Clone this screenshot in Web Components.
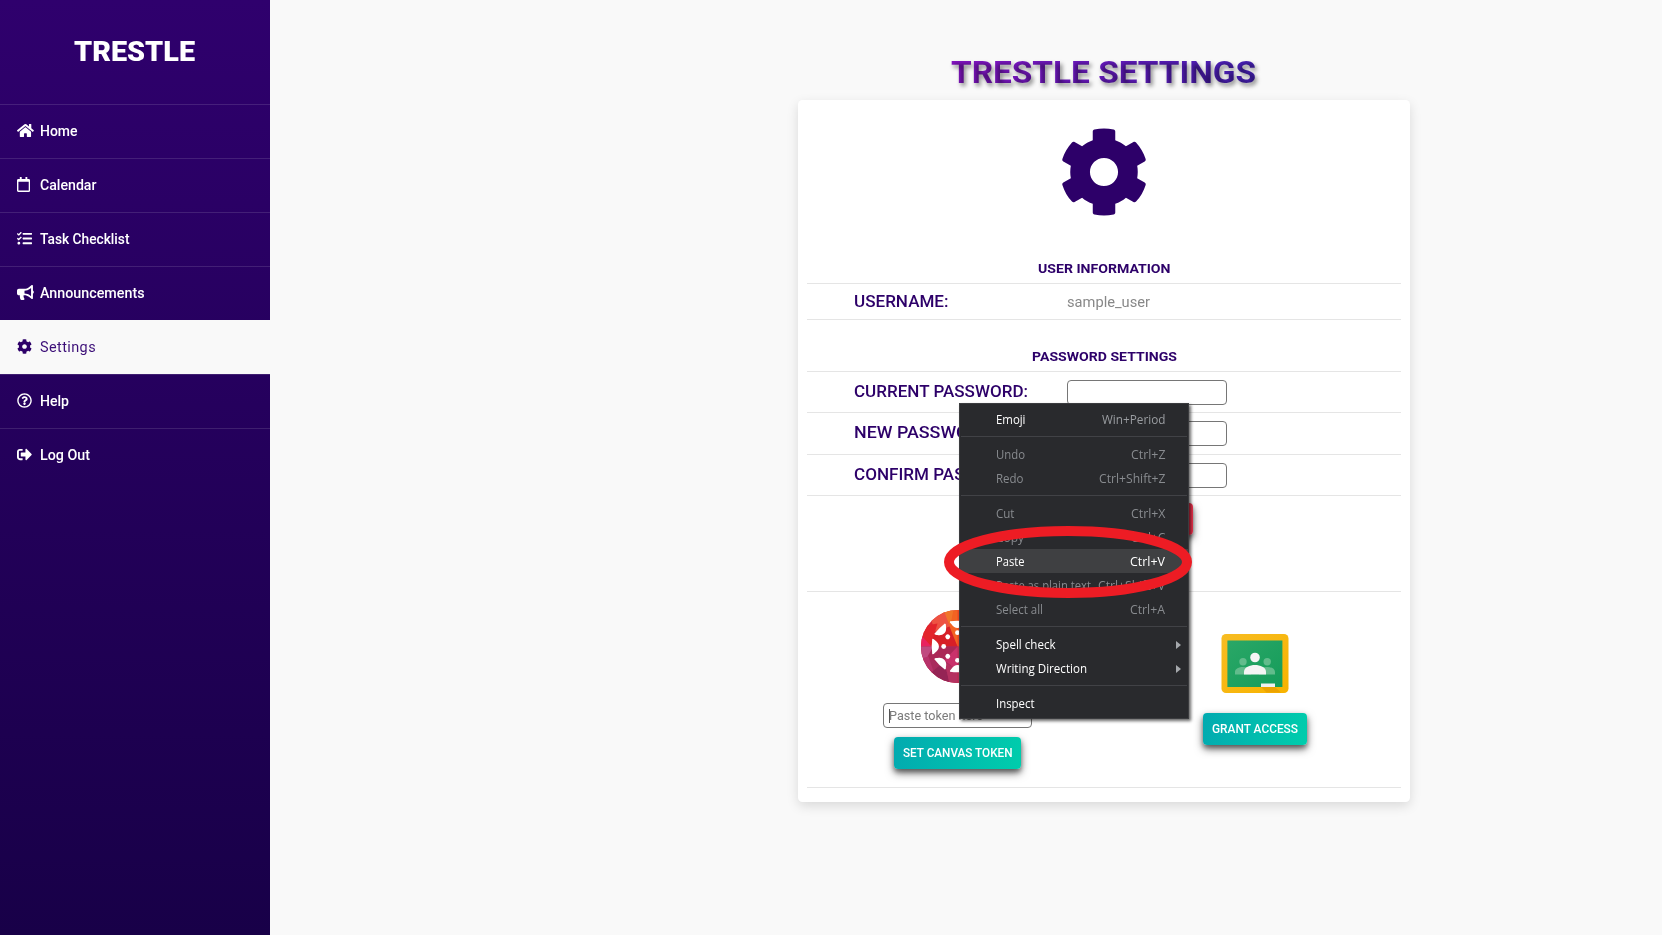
<!DOCTYPE html>
<html lang="en">
<head>
<meta charset="utf-8">
<title>Trestle Settings</title>
<style>
html,body{margin:0;height:100%;overflow:hidden}
body{font-family:Roboto,"Open Sans",sans-serif;background:#f9f9f9;color:#2d0069}
</style>
</head>
<body>
<trestle-app></trestle-app>
<script>
const ICONS = {
home:[576,"M280.37 148.26L96 300.11V464a16 16 0 0 0 16 16l112.06-.29a16 16 0 0 0 15.92-16V368a16 16 0 0 1 16-16h64a16 16 0 0 1 16 16v95.64a16 16 0 0 0 16 16.05L464 480a16 16 0 0 0 16-16V300L295.67 148.26a12.19 12.19 0 0 0-15.3 0zM571.6 251.47L488 182.56V44.05a12 12 0 0 0-12-12h-56a12 12 0 0 0-12 12v72.61L318.47 43a48 48 0 0 0-61 0L4.34 251.47a12 12 0 0 0-1.6 16.9l25.5 31A12 12 0 0 0 45.15 301l235.22-193.74a12.19 12.19 0 0 1 15.3 0L530.9 301a12 12 0 0 0 16.9-1.6l25.5-31a12 12 0 0 0-1.7-16.93z"],
calendar:[448,"M400 64h-48V12c0-6.6-5.4-12-12-12h-40c-6.6 0-12 5.4-12 12v52H160V12c0-6.6-5.4-12-12-12h-40c-6.6 0-12 5.4-12 12v52H48C21.5 64 0 85.5 0 112v352c0 26.5 21.5 48 48 48h352c26.5 0 48-21.5 48-48V112c0-26.5-21.5-48-48-48zm-6 400H54c-3.3 0-6-2.7-6-6V160h352v298c0 3.3-2.7 6-6 6z"],
tasks:[512,"M139.61 35.5a12 12 0 0 0-17 0L58.93 98.81l-22.7-22.12a12 12 0 0 0-17 0L3.53 92.41a12 12 0 0 0 0 17l47.59 47.4a12.78 12.78 0 0 0 17.61 0l15.59-15.62L156.52 69a12.09 12.09 0 0 0 .09-17zm0 159.19a12 12 0 0 0-17 0l-63.68 63.72-22.7-22.1a12 12 0 0 0-17 0L3.53 252a12 12 0 0 0 0 17L51 316.5a12.77 12.77 0 0 0 17.6 0l15.7-15.69 72.2-72.22a12 12 0 0 0 .09-16.9zM64 368c-26.49 0-48.59 21.5-48.59 48S37.53 464 64 464a48 48 0 0 0 0-96zm432 16H208a16 16 0 0 0-16 16v32a16 16 0 0 0 16 16h288a16 16 0 0 0 16-16v-32a16 16 0 0 0-16-16zm0-320H208a16 16 0 0 0-16 16v32a16 16 0 0 0 16 16h288a16 16 0 0 0 16-16V80a16 16 0 0 0-16-16zm0 160H208a16 16 0 0 0-16 16v32a16 16 0 0 0 16 16h288a16 16 0 0 0 16-16v-32a16 16 0 0 0-16-16z"],
bullhorn:[576,"M576 240c0-23.63-12.95-44.04-32-55.12V32.01C544 23.26 537.02 0 512 0c-7.12 0-14.19 2.38-19.98 7.02l-85.03 68.03C364.28 109.19 310.66 128 256 128H64c-35.35 0-64 28.65-64 64v96c0 35.35 28.65 64 64 64h33.7c-1.39 10.48-2.18 21.14-2.18 32 0 39.77 9.26 77.35 25.56 110.94 5.19 10.69 16.52 17.06 28.4 17.06h74.28c26.05 0 41.69-29.84 25.9-50.56-16.4-21.52-26.15-48.36-26.15-77.44 0-11.11 1.62-21.79 4.41-32H256c54.66 0 108.28 18.81 150.98 52.95l85.03 68.03a32.023 32.023 0 0 0 19.98 7.02c24.92 0 32-22.78 32-32V295.13C563.05 284.04 576 263.63 576 240zm-96 141.42l-33.05-26.44C392.95 311.78 325.12 288 256 288v-96c69.12 0 136.95-23.78 190.95-66.98L480 98.58v282.84z"],
cog:[512,"M487.4 315.7l-42.6-24.6c4.3-23.2 4.3-47 0-70.2l42.6-24.6c4.9-2.8 7.1-8.6 5.5-14-11.1-35.6-30-67.8-54.7-94.6-3.8-4.1-10-5.1-14.8-2.3L380.8 110c-17.9-15.4-38.5-27.3-60.8-35.1V25.8c0-5.6-3.9-10.5-9.4-11.7-36.7-8.2-74.3-7.8-109.2 0-5.5 1.2-9.4 6.1-9.4 11.7V75c-22.2 7.9-42.8 19.8-60.8 35.1L88.7 85.5c-4.9-2.8-11-1.9-14.8 2.3-24.7 26.7-43.6 58.9-54.7 94.6-1.7 5.4.6 11.2 5.5 14L67.3 221c-4.3 23.2-4.3 47 0 70.2l-42.6 24.6c-4.9 2.8-7.1 8.6-5.5 14 11.1 35.6 30 67.8 54.7 94.6 3.8 4.1 10 5.1 14.8 2.3l42.6-24.6c17.9 15.4 38.5 27.3 60.8 35.1v49.2c0 5.6 3.9 10.5 9.4 11.7 36.7 8.2 74.3 7.8 109.2 0 5.5-1.2 9.4-6.1 9.4-11.7v-49.2c22.2-7.9 42.8-19.8 60.8-35.1l42.6 24.6c4.9 2.8 11 1.9 14.8-2.3 24.7-26.7 43.6-58.9 54.7-94.6 1.5-5.5-.7-11.3-5.6-14.1zM256 336c-44.1 0-80-35.9-80-80s35.9-80 80-80 80 35.9 80 80-35.9 80-80 80z"],
help:[512,"M256 8C119.043 8 8 119.083 8 256c0 136.997 111.043 248 248 248s248-111.003 248-248C504 119.083 392.957 8 256 8zm0 448c-110.532 0-200-89.431-200-200 0-110.495 89.472-200 200-200 110.491 0 200 89.471 200 200 0 110.53-89.431 200-200 200zm107.244-255.2c0 67.052-72.421 68.084-72.421 92.863V300c0 6.627-5.373 12-12 12h-45.647c-6.627 0-12-5.373-12-12v-8.659c0-35.745 27.1-50.034 47.579-61.516 17.561-9.845 28.324-16.541 28.324-29.579 0-17.246-21.999-28.693-39.784-28.693-23.189 0-33.894 10.977-48.942 29.969-4.057 5.12-11.46 6.071-16.666 2.124l-27.824-21.098c-5.107-3.872-6.251-11.066-2.644-16.363C184.846 131.491 214.94 112 261.794 112c49.071 0 101.45 38.304 101.45 88.8zM298 368c0 23.159-18.841 42-42 42s-42-18.841-42-42 18.841-42 42-42 42 18.841 42 42z"],
logout:[512,"M497 273L329 441c-15 15-41 4.5-41-17v-96H152c-13.3 0-24-10.7-24-24v-96c0-13.3 10.7-24 24-24h136V88c0-21.4 25.9-32 41-17l168 168c9.3 9.4 9.3 24.6 0 34zM192 436v-40c0-6.6-5.4-12-12-12H96c-17.7 0-32-14.3-32-32V160c0-17.7 14.3-32 32-32h84c6.6 0 12-5.4 12-12V76c0-6.6-5.4-12-12-12H96c-53 0-96 43-96 96v192c0 53 43 96 96 96h84c6.6 0 12-5.4 12-12z"]
};

function define(name, html, setup) {
  const tpl = document.createElement('template');
  tpl.innerHTML = html;
  customElements.define(name, class extends HTMLElement {
    connectedCallback() {
      if (this.shadowRoot) return;
      this.attachShadow({mode:'open'}).appendChild(tpl.content.cloneNode(true));
      if (setup) setup(this, this.shadowRoot);
    }
  });
}

// A single-line label stretched horizontally to a set width.
define('fit-text', `<style>
:host{display:inline-block;white-space:nowrap;flex:none}
span{display:inline-block;transform-origin:0 50%;background:var(--ink,none);-webkit-background-clip:text;background-clip:text}
</style><span><slot></slot></span>`, (el, root) => {
  const w = parseFloat(el.getAttribute('w'));
  const s = root.querySelector('span');
  const natural = s.getBoundingClientRect().width;
  el.style.width = w + 'px';
  if (natural) s.style.transform = `scaleX(${w / natural})`;
});

define('fa-icon', `<style>:host{display:inline-block;height:1em;line-height:0}svg{height:1em;fill:currentColor}</style><svg><path/></svg>`,
(el, root) => {
  const [w, d] = ICONS[el.getAttribute('name')];
  const svg = root.querySelector('svg');
  svg.setAttribute('viewBox', `0 0 ${w} 512`);
  svg.style.width = w / 512 + 'em';
  root.querySelector('path').setAttribute('d', d);
});

define('nav-item', `<style>
:host{display:flex;align-items:center;height:53px;border-top:1px solid rgba(255,255,255,.12);padding-left:17.3px;color:#fff;font-size:14px;font-weight:500;line-height:20px}
:host([active]){background:#f9f9f9;color:#3c0f78;font-weight:400;border-top-color:#f9f9f9;letter-spacing:.4px}
:host([active]) .i{color:#2d0069}
.i{width:23px;font-size:15px;display:flex;align-items:center;margin-top:-2px}
.t{margin-top:-1px}
</style><span class="i"></span><span class="t"><slot></slot></span>`, (el, root) => {
  const icon = document.createElement('fa-icon');
  icon.setAttribute('name', el.getAttribute('icon'));
  root.querySelector('.i').append(icon);
});

define('side-bar', `<style>
:host{display:flex;flex-direction:column;width:270px;flex:none;background:linear-gradient(#2f006d,#180048)}
.brand{height:104px;display:flex;align-items:center;justify-content:center;box-sizing:border-box;padding-right:1px;color:#fff;font-size:27px;font-weight:900;line-height:32px}
</style>
<div class="brand"><fit-text w="121">TRESTLE</fit-text></div>
<nav>
<nav-item icon="home"><fit-text w="37.5">Home</fit-text></nav-item>
<nav-item icon="calendar"><fit-text w="56.5">Calendar</fit-text></nav-item>
<nav-item icon="tasks"><fit-text w="89.5">Task Checklist</fit-text></nav-item>
<nav-item icon="bullhorn"><fit-text w="104.5">Announcements</fit-text></nav-item>
<nav-item icon="cog" active><fit-text w="56">Settings</fit-text></nav-item>
<nav-item icon="help"><fit-text w="29">Help</fit-text></nav-item>
<nav-item icon="logout"><fit-text w="50">Log Out</fit-text></nav-item>
</nav>`);

define('section-title', `<style>
:host{display:flex;align-items:flex-end;justify-content:center;box-sizing:border-box;font-size:13.6px;font-weight:700;line-height:20px;padding-bottom:5px}
</style><slot></slot>`);

define('form-row', `<style>
:host{display:flex;align-items:center;box-sizing:border-box;border-top:1px solid #e5e5e5;padding-left:47.4px}
.label{width:212.6px;font-size:16.4px;font-weight:500;line-height:20px;padding-bottom:1px}
</style><div class="label"><slot name="label"></slot></div><slot></slot>`);

define('text-box', `<style>
:host{display:flex;align-items:center;box-sizing:border-box;width:160px;height:25px;border:1px solid #767676;border-radius:4px;background:#fff;color:#7b7b7b;font-size:13.3px;line-height:16px;padding-left:5px}
:host([focused])::before{content:"";width:1px;height:14px;background:#555;margin-right:-1px}
</style><slot></slot>`);

define('action-button', `<style>
:host{display:flex;align-items:center;justify-content:center;height:32px;border-radius:4px;background:linear-gradient(100deg,#02aab0,#00cdac);color:#fff;font-size:12.3px;font-weight:500;line-height:16px;box-shadow:0 4px 8px rgba(0,0,0,.55),0 3px 4px rgba(0,0,0,.3)}
:host([danger]){background:linear-gradient(100deg,#ff5060,#e8304a)}
</style><slot></slot>`);

define('canvas-logo', `<style>:host{display:block;line-height:0}</style>
<svg width="73" height="73" viewBox="-36.5 -36.5 73 73">
<clipPath id="c"><circle r="36.5"/></clipPath>
<g clip-path="url(#c)">
<rect x="-37" y="-37" width="74" height="74" fill="#d92b3a"/>
<path d="M0 0L-18-37H20z" fill="#f26322"/><path d="M0 0L0-37 37-37 37 0z" fill="#ed4b24"/>
<path d="M-7-22L-18-37H-4z" fill="#f0762a"/><path d="M-22-14L-30-37H-14L-7-18z" fill="#ee5242"/>
<path d="M0 0L-8-20-30-12-25 0z" fill="#d71f27"/><path d="M-37-20L-20-23-27 0H-37z" fill="#e3242b"/>
<path d="M-37-12L-26 0H-37z" fill="#e8235f"/>
<path d="M-37 0H0V37H-37z" fill="#a92a5d"/><path d="M-37 0H-24L-30 12-37 14z" fill="#c04a80"/>
<path d="M-30 10L-24 0 0 0-18 18z" fill="#ab2757"/><path d="M-37 12L-29 10-24 25-37 25z" fill="#b8326a"/>
<path d="M-25 25L-13 15-8 37H-25z" fill="#952455"/><path d="M-13 15L0 24V37H-8z" fill="#b43160"/>
<path d="M0 0L-13 14 0 24 13 14z" fill="#c9316b"/><path d="M0 0H37V37H0z" fill="#b93058"/>
</g>
<g fill="#fff"></g></svg>`, (el, root) => {
  let s = '';
  for (let a = 0; a < 360; a += 45)
    s += `<g transform="rotate(${a})"><path d="M-25.3-7.4Q-24.4-8.4-22.5-6.2Q-18.6-3.5-18.6 0T-22.5 6.2Q-24.4 8.4-25.3 7.4Q-26.3 0-25.3-7.4Z"/><circle cx="-13.8" r="2.4"/></g>`;
  root.querySelector('svg>g:last-of-type').innerHTML = s;
});

define('classroom-logo', `<style>:host{display:block;line-height:0}</style>
<svg width="68" height="59" viewBox="0 0 68 59">
<defs><linearGradient id="y" x2="1" y2="1"><stop stop-color="#f7bc22"/><stop offset="1" stop-color="#f8b300"/></linearGradient>
<linearGradient id="g" x2="1" y2="1"><stop stop-color="#2aa767"/><stop offset="1" stop-color="#159c5a"/></linearGradient></defs>
<rect x=".5" width="67" height="59" rx="4.5" fill="url(#y)"/><rect x="6.4" y="6.5" width="55" height="46.5" fill="url(#g)"/>
<g fill="#62bc8c"><circle cx="22" cy="27.8" r="3.7"/><circle cx="46.2" cy="27.8" r="3.7"/>
<path d="M14 40.5V38c0-3.500 4-5 8-5s6 1 8 3v4.500zM38 40.500V36c2-2 4-3 8-3s8 1.500 8 5v2.500z"/></g>
<g fill="#f4f5f4"><circle cx="34" cy="23.5" r="4.8"/><path d="M23 40.500V38c0-5 6-7 11-7s11 2 11 7v2.500z"/></g>
<path d="M40 53h14l6 5.500H45.500z" fill="#eda300"/><rect x="40" y="49.500" width="14" height="3.500" fill="#f0f0f0"/></svg>`);

define('settings-card', `<style>
:host{display:block;box-sizing:border-box;width:612px;height:702px;background:#fff;border-radius:4.5px;padding:27px 9px 0;box-shadow:0 4px 12px rgba(0,0,0,.13)}
.gear{display:block;height:90px;font-size:90px;text-align:center}
.user{color:#888;font-size:14px;line-height:18px;padding-top:1px}
.submit{height:96px;box-sizing:border-box;border-top:1px solid #e5e5e5;display:flex;justify-content:center;padding-top:7px}
.links{height:197px;box-sizing:border-box;border:solid #e5e5e5;border-width:1px 0;display:grid;grid-template-columns:301px 1fr}
.col{display:flex;flex-direction:column;align-items:center}
.a{padding-top:18px}
.b{padding-top:42px;margin-left:1px}
</style>
<fa-icon class="gear" name="cog"></fa-icon>
<section-title style="height:66px"><fit-text w="132.500">USER INFORMATION</fit-text></section-title>
<form-row style="height:36px"><fit-text slot="label" w="94.500" style="padding-top:2px">USERNAME:</fit-text><fit-text class="user" w="83">sample_user</fit-text></form-row>
<section-title style="height:52px;border-top:1px solid #e5e5e5"><fit-text w="145">PASSWORD SETTINGS</fit-text></section-title>
<form-row style="height:41px"><fit-text slot="label" w="174">CURRENT PASSWORD:</fit-text><text-box></text-box></form-row>
<form-row style="height:42px"><fit-text slot="label" w="142">NEW PASSWORD:</fit-text><text-box></text-box></form-row>
<form-row style="height:41px"><fit-text slot="label" w="174">CONFIRM PASSWORD:</fit-text><text-box></text-box></form-row>
<div class="submit"><action-button danger style="width:178px"></action-button></div>
<div class="links">
<div class="col a"><canvas-logo></canvas-logo>
<text-box focused style="width:149px;margin-top:20px"><fit-text w="94">Paste token here</fit-text></text-box>
<action-button style="width:127px;margin-top:9px"><fit-text w="109.500">SET CANVAS TOKEN</fit-text></action-button></div>
<div class="col b"><classroom-logo></classroom-logo>
<action-button style="width:104px;margin-top:20px"><fit-text w="86">GRANT ACCESS</fit-text></action-button></div>
</div>`);

define('menu-item', `<style>
:host{display:flex;align-items:center;justify-content:space-between;height:24px;box-sizing:border-box;padding:1px 23px 0 36px;color:#888b8f}
:host([on]){color:#fff}
:host([hot]){background:#3f4042;--k:#fff}
.k{color:var(--k,#888b8f)}
:host([first]) .k{color:#9a9da1}
:host([sub])::after{content:"";border:4px solid transparent;border-left:5px solid #a5a8ac;border-right:0;margin-right:-16px}
:host([sub]) .k{display:none}
</style><slot></slot><span class="k"><slot name="key"></slot></span>`);

define('context-menu', `<style>
:host{display:block;box-sizing:border-box;width:230px;height:316px;background:#292a2d;border:1px solid #3b3c3f;padding:3px 0;font:12px/16px "Open Sans","Noto Sans",sans-serif;box-shadow:2px 2px 3px rgba(0,0,0,.6)}
hr{height:1px;border:0;margin:5px 1px;background:#414246}
</style>
<menu-item on first><fit-text w="29.500">Emoji</fit-text><fit-text slot="key" w="63.500">Win+Period</fit-text></menu-item><hr>
<menu-item><fit-text w="29">Undo</fit-text><fit-text slot="key" w="34.500">Ctrl+Z</fit-text></menu-item>
<menu-item><fit-text w="27.500">Redo</fit-text><fit-text slot="key" w="66.500">Ctrl+Shift+Z</fit-text></menu-item><hr>
<menu-item><fit-text w="18.500">Cut</fit-text><fit-text slot="key" w="34.500">Ctrl+X</fit-text></menu-item>
<menu-item><fit-text w="28">Copy</fit-text><fit-text slot="key" w="34.500">Ctrl+C</fit-text></menu-item>
<menu-item on hot><fit-text w="28.500">Paste</fit-text><fit-text slot="key" w="35">Ctrl+V</fit-text></menu-item>
<menu-item><fit-text w="95">Paste as plain text</fit-text><fit-text slot="key" w="67">Ctrl+Shift+V</fit-text></menu-item>
<menu-item><fit-text w="47">Select all</fit-text><fit-text slot="key" w="35">Ctrl+A</fit-text></menu-item><hr>
<menu-item on sub><fit-text w="59.500">Spell check</fit-text></menu-item>
<menu-item on sub><fit-text w="91">Writing Direction</fit-text></menu-item><hr>
<menu-item on><fit-text w="38.500">Inspect</fit-text></menu-item>`);

define('highlight-ring', `<style>:host{display:block;line-height:0}</style>
<svg width="248" height="72"><ellipse cx="124" cy="36" rx="119" ry="31" fill="none" stroke="#ed1c24" stroke-width="10"/></svg>`);

define('trestle-app', `<style>
:host{display:flex;height:100vh;position:relative}
main{flex:1;display:flex;flex-direction:column;align-items:center;padding-left:276px}
h1{margin:0;height:100px;box-sizing:border-box;padding:52px 1px 0 0;font-size:32px;line-height:40px;font-weight:700;color:transparent;text-shadow:2px 3px 4px rgba(0,0,0,.43);--ink:linear-gradient(100deg,#8614c4,#4420b4)}
context-menu{position:absolute;left:959px;top:403px}
highlight-ring{position:absolute;left:944px;top:526px}
</style>
<side-bar></side-bar>
<main><h1><fit-text w="305">TRESTLE SETTINGS</fit-text></h1><settings-card></settings-card></main>
<context-menu></context-menu>
<highlight-ring></highlight-ring>`);
</script>
</body>
</html>
